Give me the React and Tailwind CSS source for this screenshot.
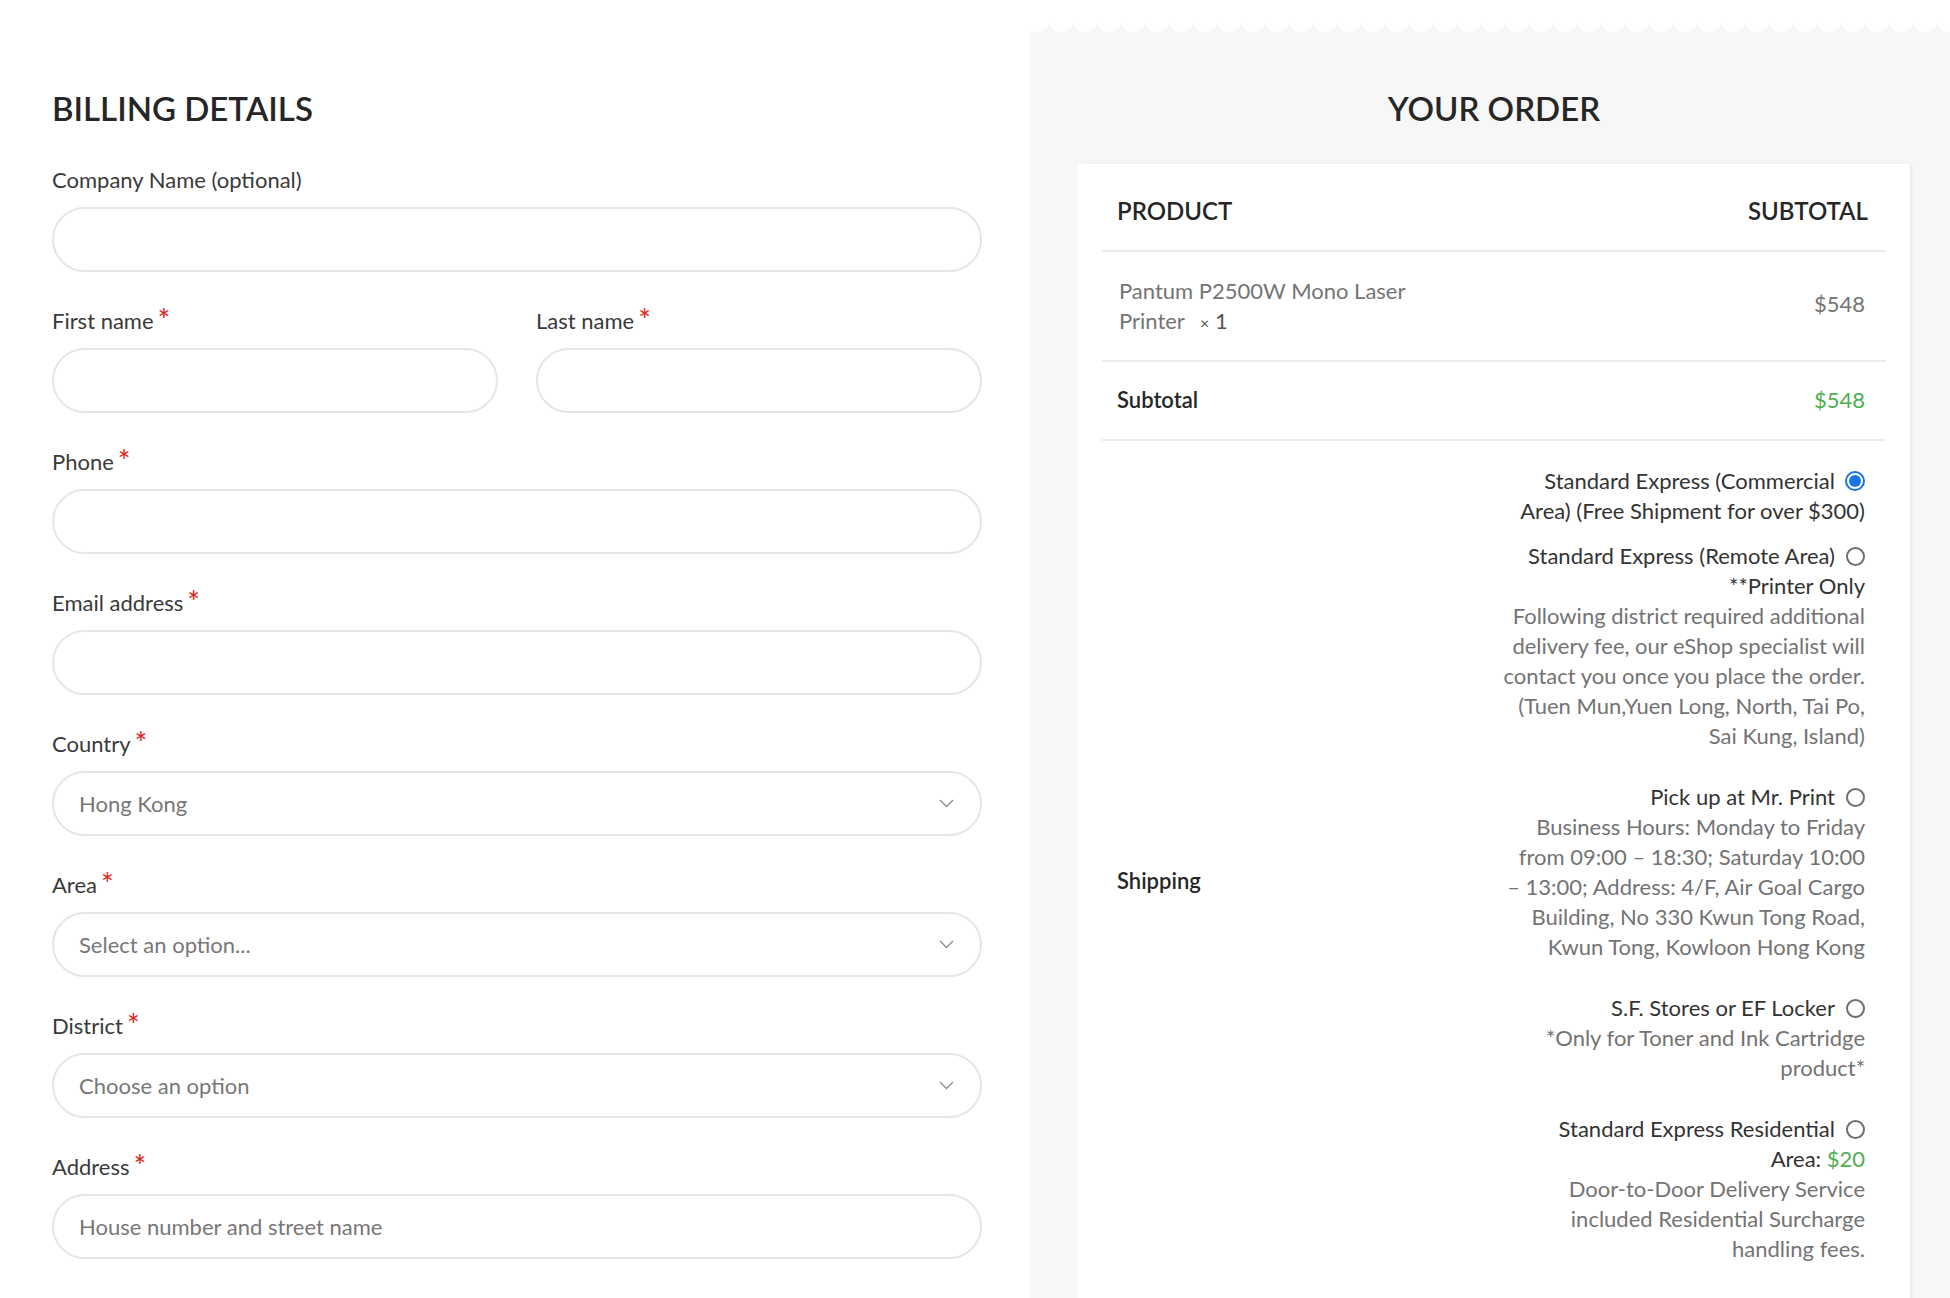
import React from 'react';

const Req = () => (
  <span className="relative top-[2px] ml-[4px] inline-block text-[30px] leading-[0] text-[#e2231a]">*</span>
);

const Chevron = () => (
  <svg width="15" height="9" viewBox="0 0 15 9" className="shrink-0">
    <polyline points="1,1 7.5,7.5 14,1" fill="none" stroke="#8a8a8a" strokeWidth="1.3" />
  </svg>
);

const Field = ({ label, required = true, placeholder, select = false }) => (
  <div className="mb-[34px]">
    <div className="h-[30px] leading-[30px] mb-[12px] text-[22px] text-[#3a3a3a]">
      {label}
      {required && <Req />}
    </div>
    <div className="h-[65px] rounded-full border-2 border-[#e6e6e6] bg-white flex items-center pl-[25px] pr-[26px]">
      <span className="flex-1 text-[22px] text-[#777]">{placeholder}</span>
      {select && <Chevron />}
    </div>
  </div>
);

const Radio = ({ checked }) => (
  <span className="float-right ml-[10px] mt-[5px] w-[20px] h-[20px] flex items-center justify-center">
    {checked ? (
      <span className="w-[20px] h-[20px] rounded-full border-2 border-[#1a73e8] flex items-center justify-center">
        <span className="w-[12px] h-[12px] rounded-full bg-[#1a73e8]" />
      </span>
    ) : (
      <span className="w-[19px] h-[19px] rounded-full border-2 border-[#6f6f6f]" />
    )}
  </span>
);

const shippingOptions = [
  {
    checked: true,
    lines: ['Standard Express (Commercial', 'Area) (Free Shipment for over $300)'],
  },
  {
    lines: ['Standard Express (Remote Area)', '**Printer Only'],
    desc: [
      'Following district required additional',
      'delivery fee, our eShop specialist will',
      'contact you once you place the order.',
      '(Tuen Mun,Yuen Long, North, Tai Po,',
      'Sai Kung, Island)',
    ],
  },
  {
    lines: ['Pick up at Mr. Print'],
    desc: [
      'Business Hours: Monday to Friday',
      'from 09:00 – 18:30; Saturday 10:00',
      '– 13:00; Address: 4/F, Air Goal Cargo',
      'Building, No 330 Kwun Tong Road,',
      'Kwun Tong, Kowloon Hong Kong',
    ],
  },
  {
    lines: ['S.F. Stores or EF Locker'],
    desc: ['*Only for Toner and Ink Cartridge', 'product*'],
  },
  {
    lines: [
      'Standard Express Residential',
      <>Area: <span className="text-[#4caf50]">$20</span></>,
    ],
    desc: [
      'Door-to-Door Delivery Service',
      'included Residential Surcharge',
      'handling fees.',
    ],
  },
];

const withBreaks = (lines) =>
  lines.map((line, i) => (
    <React.Fragment key={i}>
      {line}
      {i < lines.length - 1 && <br />}
    </React.Fragment>
  ));

export default function App() {
  return (
    <div className="min-h-[1298px] w-[1950px] flex bg-white font-['Lato',sans-serif] leading-[30px]">
      {/* Billing form */}
      <div className="w-[1030px] shrink-0 pl-[52px] pr-[48px] pt-[88px]">
        <h3 className="text-[33px] leading-[40px] font-semibold text-[#262626] mb-[37px]">BILLING DETAILS</h3>

        <Field label="Company Name (optional)" required={false} />
        <div className="grid grid-cols-2 gap-x-[38px]">
          <Field label="First name" />
          <Field label="Last name" />
        </div>
        <Field label="Phone" />
        <Field label="Email address" />
        <Field label="Country" placeholder="Hong Kong" select />
        <Field label="Area" placeholder="Select an option..." select />
        <Field label="District" placeholder="Choose an option" select />
        <Field label="Address" placeholder="House number and street name" />
      </div>

      {/* Order review */}
      <div className="flex-1 mt-[20px] bg-[#f7f7f7] relative pt-[68px] pl-[48px] pr-[40px]">
        <div className="absolute left-0 right-0 top-0 h-[14px] bg-[radial-gradient(circle_at_50%_0,#ffffff_11.5px,transparent_12.5px)] bg-[length:24px_14px] bg-repeat-x bg-[position:-5px_0]" />
        <h3 className="text-center text-[33px] leading-[40px] font-semibold text-[#262626] mb-[36px]">YOUR ORDER</h3>

        <div className="bg-white px-[24px] shadow-[2px_0_3px_rgba(0,0,0,0.05)] text-[22px]">
          <div className="flex justify-between pt-[32px] pb-[24px] pl-[15px] pr-[18px] border-b-2 border-[#ececec] text-[24px] font-semibold text-[#262626]">
            <span>PRODUCT</span>
            <span>SUBTOTAL</span>
          </div>

          <div className="flex items-center justify-between py-[24px] pl-[17px] pr-[21px] border-b-2 border-[#ececec] text-[#747474]">
            <div>
              Pantum P2500W Mono Laser
              <br />
              Printer <span className="ml-[10px] text-[#555]"><span className="text-[16px] leading-none">×</span>&nbsp;1</span>
            </div>
            <span className="mb-[4px]">$548</span>
          </div>

          <div className="flex items-center justify-between pt-[23px] pb-[24px] pl-[15px] pr-[21px] border-b-2 border-[#ececec]">
            <span className="font-semibold text-[#262626]">Subtotal</span>
            <span className="text-[#4caf50]">$548</span>
          </div>

          <div className="flex items-center justify-between pt-[25px] pb-[24px] pl-[15px] pr-[21px]">
            <span className="font-semibold text-[#262626]">Shipping</span>
            <ul className="w-[420px] text-right">
              {shippingOptions.map((opt, i) => (
                <li key={i} className="pb-[15px]">
                  <div className="text-[#333]">
                    <Radio checked={opt.checked} />
                    {withBreaks(opt.lines)}
                  </div>
                  {opt.desc && (
                    <p className="mb-[16px] text-[#737373]">{withBreaks(opt.desc)}</p>
                  )}
                </li>
              ))}
            </ul>
          </div>
        </div>
      </div>
    </div>
  );
}
